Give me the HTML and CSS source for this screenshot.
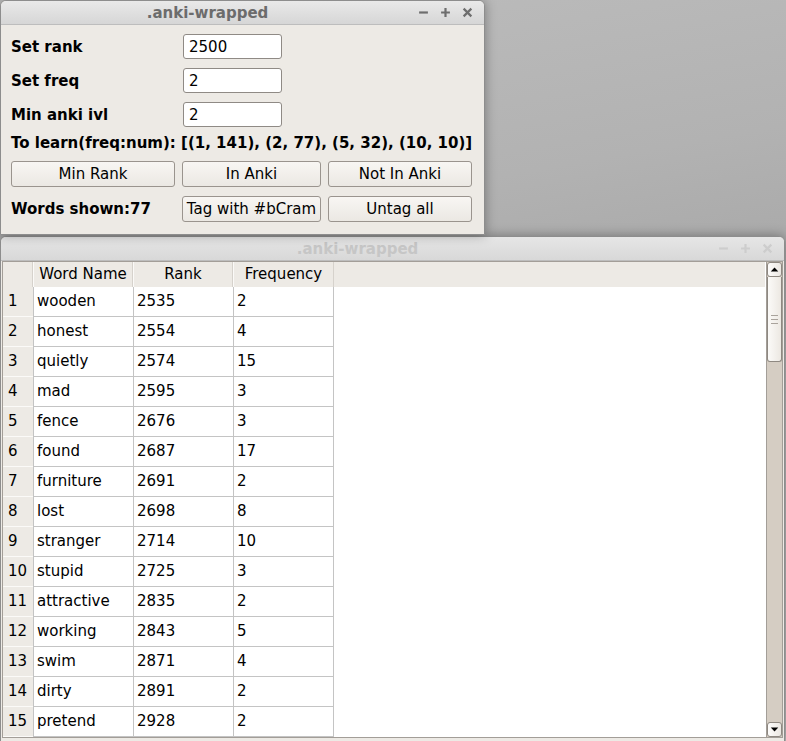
FILE: index.html
```html
<!DOCTYPE html>
<html>
<head>
<meta charset="utf-8">
<link rel="stylesheet" href="styles.css">
</head>
<body>
<div class="desk">
  <div class="win win-main">
    <div class="titlebar">
      <div class="title">.anki-wrapped</div>
      <div class="ctrls">
        <svg viewBox="0 0 10 10" class="ic"><path d="M1 5H9"/></svg>
        <svg viewBox="0 0 10 10" class="ic"><path d="M1 5H9M5 1V9"/></svg>
        <svg viewBox="0 0 10 10" class="ic"><path d="M1.5 1.5L8.5 8.5M8.5 1.5L1.5 8.5"/></svg>
      </div>
    </div>
    <div class="body">
      <div class="row row-in first"><span class="lbl">Set rank</span><input class="inp" value="2500" readonly></div>
      <div class="row row-in"><span class="lbl">Set freq</span><input class="inp" value="2" readonly></div>
      <div class="row row-in"><span class="lbl">Min anki ivl</span><input class="inp" value="2" readonly></div>
      <div class="learn">To learn(freq:num): [(1, 141), (2, 77), (5, 32), (10, 10)]</div>
      <div class="row row-btn"><button class="btn">Min Rank</button><button class="btn">In Anki</button><button class="btn">Not In Anki</button></div>
      <div class="row row-btn2"><span class="lbl">Words shown:77</span><button class="btn">Tag with #bCram</button><button class="btn">Untag all</button></div>
    </div>
  </div>

  <div class="win win-table inactive">
    <div class="titlebar">
      <div class="title">.anki-wrapped</div>
      <div class="ctrls">
        <svg viewBox="0 0 10 10" class="ic"><path d="M1 5H9"/></svg>
        <svg viewBox="0 0 10 10" class="ic"><path d="M1 5H9M5 1V9"/></svg>
        <svg viewBox="0 0 10 10" class="ic"><path d="M1.5 1.5L8.5 8.5M8.5 1.5L1.5 8.5"/></svg>
      </div>
    </div>
    <div class="tbody">
      <div class="frame">
        <div class="view">
          <div class="grid">
            <div class="hd corner"></div><div class="hd">Word Name</div><div class="hd">Rank</div><div class="hd">Frequency</div>
            <div class="rh">1</div><div class="c">wooden</div><div class="c">2535</div><div class="c last">2</div>
            <div class="rh">2</div><div class="c">honest</div><div class="c">2554</div><div class="c last">4</div>
            <div class="rh">3</div><div class="c">quietly</div><div class="c">2574</div><div class="c last">15</div>
            <div class="rh">4</div><div class="c">mad</div><div class="c">2595</div><div class="c last">3</div>
            <div class="rh">5</div><div class="c">fence</div><div class="c">2676</div><div class="c last">3</div>
            <div class="rh">6</div><div class="c">found</div><div class="c">2687</div><div class="c last">17</div>
            <div class="rh">7</div><div class="c">furniture</div><div class="c">2691</div><div class="c last">2</div>
            <div class="rh">8</div><div class="c">lost</div><div class="c">2698</div><div class="c last">8</div>
            <div class="rh">9</div><div class="c">stranger</div><div class="c">2714</div><div class="c last">10</div>
            <div class="rh">10</div><div class="c">stupid</div><div class="c">2725</div><div class="c last">3</div>
            <div class="rh">11</div><div class="c">attractive</div><div class="c">2835</div><div class="c last">2</div>
            <div class="rh">12</div><div class="c">working</div><div class="c">2843</div><div class="c last">5</div>
            <div class="rh">13</div><div class="c">swim</div><div class="c">2871</div><div class="c last">4</div>
            <div class="rh">14</div><div class="c">dirty</div><div class="c">2891</div><div class="c last">2</div>
            <div class="rh">15</div><div class="c">pretend</div><div class="c">2928</div><div class="c last">2</div>
          </div>
        </div>
        <div class="sbar">
          <div class="sbtn"><svg viewBox="0 0 10 6" class="tri"><path d="M0.5 5.5L5 0.5L9.5 5.5Z"/></svg></div>
          <div class="thumb"><span></span><span></span><span></span></div>
          <div class="trough"></div>
          <div class="sbtn"><svg viewBox="0 0 10 6" class="tri"><path d="M0.5 0.5L5 5.5L9.5 0.5Z"/></svg></div>
        </div>
      </div>
    </div>
  </div>
</div>
</body>
</html>
```

FILE: styles.css
```css
* { box-sizing: border-box; }
html, body { margin: 0; padding: 0; }
body {
  font-family: "DejaVu Sans", "Liberation Sans", sans-serif;
  font-size: 15px;
  color: #000;
}
.desk {
  position: relative;
  width: 786px;
  height: 741px;
  overflow: hidden;
  background: linear-gradient(170deg, #bdbdbd 0%, #b2b2b2 30%, #a9a9a9 45%, #b4b4b4 60%, #b8b8b8 100%);
}
.win {
  position: absolute;
  background: #edeae5;
  border: 1px solid #8d8d8d;
  border-radius: 6px 6px 0 0;
  box-shadow: 0 0 12px rgba(0,0,0,0.35);
  display: flex;
  flex-direction: column;
}
.win-main { left: 0; top: 0; width: 485px; height: 235px; z-index: 2; }
.win-table { left: 0; top: 236px; width: 785px; height: 506px; z-index: 1; }

.titlebar {
  height: 24px;
  flex: none;
  display: flex;
  align-items: center;
  background: linear-gradient(#e9e9e9, #d6d6d6);
  border-bottom: 1px solid #bdbdbd;
  border-radius: 5px 5px 0 0;
}
.title {
  flex: 1;
  text-align: center;
  font-weight: bold;
  font-size: 15px;
  color: #6c6c6c;
  padding-left: 4px;
}
.ctrls {
  display: flex;
  gap: 11px;
  padding-right: 11px;
  padding-left: 8px;
}
.ic { width: 11px; height: 11px; display: block; }
.ic path { stroke: #6e6e6e; stroke-width: 2; fill: none; }
.inactive .title { color: #c6c6c6; }
.inactive .ic path { stroke: #cdcdcd; }
.inactive .titlebar { background: linear-gradient(#e6e6e6, #d8d8d8); }

.body { padding: 9px 11px 0 10px; }
.row {
  display: grid;
  grid-template-columns: 164px 139px 144px;
  column-gap: 7px;
  align-items: center;
}
.row-in { height: 25px; margin-top: 9px; }
.row-in.first { margin-top: 0; }
.lbl { font-weight: bold; }
.inp {
  width: 99px;
  height: 25px;
  margin-left: 1px;
  border: 1px solid #8f8a85;
  border-radius: 3px;
  background: #fff;
  font: inherit;
  padding: 0 5px;
  color: #000;
  outline: none;
}
.learn {
  font-weight: bold;
  height: 20px;
  line-height: 20px;
  margin-top: 6px;
  white-space: nowrap;
}
.row-btn { height: 26px; margin-top: 8px; }
.row-btn2 { height: 26px; margin-top: 9px; }
.btn {
  height: 26px;
  font: inherit;
  color: #000;
  border: 1px solid #9a948e;
  border-radius: 3px;
  background: linear-gradient(#f8f6f3, #ebe8e3);
  padding: 0;
}

.tbody { flex: 1; padding: 0 1px 3px 1px; }
.frame {
  height: 477px;
  border: 1px solid #a39e98;
  display: flex;
  background: #fff;
}
.view { flex: 1; overflow: hidden; background: #fff; }
.grid {
  display: grid;
  grid-template-columns: 30px 100px 100px 101px;
  grid-auto-rows: 30px;
  grid-template-rows: 25px;
  position: relative;
}
.grid::before {
  content: "";
  position: absolute;
  left: 0; top: 0;
  width: 762px; height: 25px;
  background: #edeae5;
  z-index: 0;
}
.hd {
  position: relative;
  z-index: 1;
  background: #edeae5;
  text-align: center;
  line-height: 25px;
  border-left: 1px solid #fbfaf8;
  border-right: 1px solid #d6d2cc;
}
.hd.corner { border-left: none; }
.rh {
  background: #edeae5;
  border-bottom: 1px solid #fbfaf8;
  padding-left: 5px;
  line-height: 29px;
}
.c {
  border-left: 1px solid #c4c4c4;
  border-bottom: 1px solid #c4c4c4;
  padding-left: 3px;
  line-height: 29px;
  white-space: nowrap;
}
.c.last { border-right: 1px solid #c4c4c4; }

.sbar {
  width: 16px;
  flex: none;
  display: flex;
  flex-direction: column;
  background: #d5cdc3;
  border-left: 1px solid #a39e98;
}
.sbtn {
  height: 15px;
  flex: none;
  display: flex;
  align-items: center;
  justify-content: center;
  background: linear-gradient(90deg, #fdfcfb, #ebe7e2);
  border: 1px solid #8e8881;
  border-radius: 3px;
}
.tri { width: 9px; height: 5px; display: block; }
.tri path { fill: #000; }
.thumb {
  height: 85px;
  flex: none;
  background: linear-gradient(90deg, #fbfaf8, #ece8e2);
  border: 1px solid #8e8881;
  border-top: none;
  border-radius: 0 0 3px 3px;
  display: flex;
  flex-direction: column;
  align-items: center;
  justify-content: center;
  gap: 3px;
}
.thumb span { display: block; width: 7px; height: 1px; background: #a9a39c; }
.trough { flex: 1; }
```
